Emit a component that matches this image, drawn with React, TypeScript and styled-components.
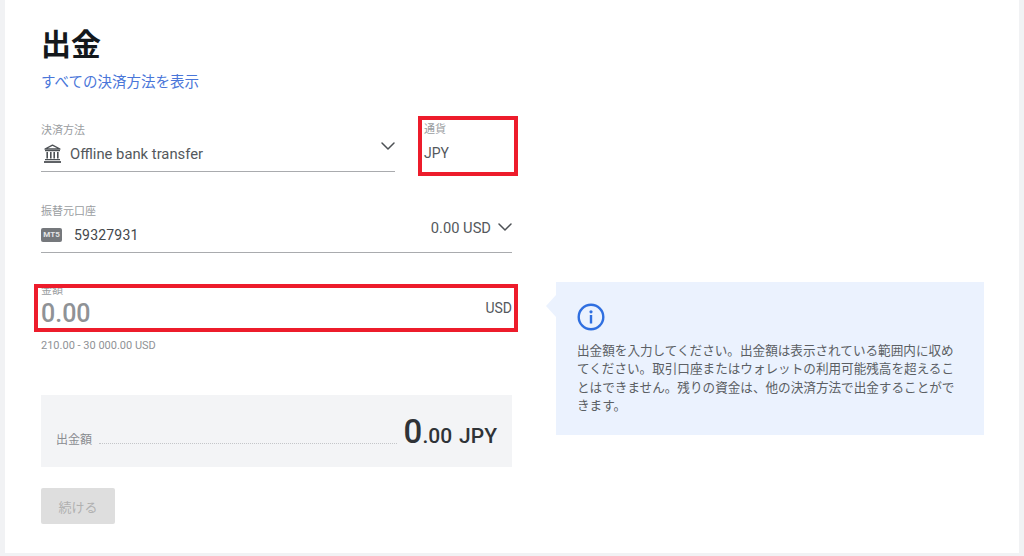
import styled, { createGlobalStyle } from 'styled-components'
import { ChevronDown } from 'lucide-react'

const FONT = `Roboto, 'Noto Sans CJK JP', sans-serif`

const GlobalStyle = createGlobalStyle`
  html, body {
    margin: 0;
    padding: 0;
    background: #f1f2f4;
    font-family: ${FONT};
  }
`

const Page = styled.div`
  width: 1024px;
  height: 556px;
  padding: 0 5px 3px;
  box-sizing: border-box;
  overflow: hidden;
`

const Card = styled.main`
  height: 553px;
  background: #fff;
  box-sizing: border-box;
  padding: 26px 35px 0 36px;
`

const Title = styled.h1`
  margin: 0;
  font-size: 30px;
  line-height: 38px;
  font-weight: 700;
  color: #14181c;
`

const AllMethods = styled.a`
  display: block;
  margin-top: 9px;
  font-size: 14.5px;
  line-height: 20px;
  color: #4a76d9;
`

const Columns = styled.div`
  display: flex;
  align-items: flex-start;
  margin-top: 31px;
`

const FormColumn = styled.div`
  width: 471px;
  flex: none;
`

const TopRow = styled.div`
  display: flex;
  align-items: flex-start;
`

const SelectField = styled.div<{ $width?: string }>`
  width: ${(p) => p.$width ?? '100%'};
  height: 48px;
  flex: none;
  box-sizing: border-box;
  border-bottom: 1px solid #a9abae;
  position: relative;
`

const FieldLabel = styled.div`
  font-size: 11px;
  line-height: 14px;
  color: #9a9da1;
`

const ValueRow = styled.div`
  display: flex;
  align-items: center;
  height: 26px;
  margin-top: 3px;
  font-size: 14.8px;
  color: #54585c;
`

const BankGlyph = styled.svg`
  width: 19px;
  height: 20px;
  margin: 0 8px 0 2px;
  flex: none;
`

const Chevron = styled(ChevronDown)`
  position: absolute;
  right: -5px;
  top: 10px;
  color: #4d5155;
`

const CurrencyBox = styled.div`
  width: 100px;
  height: 60px;
  margin: -8px 0 0 23px;
  flex: none;
  box-sizing: border-box;
  border: 4px solid #ed1c2b;
  padding: 3px 0 0 2px;
`

const CurrencyValue = styled.div`
  margin-top: 6px;
  font-size: 14px;
  line-height: 20px;
  color: #54585c;
`

const SourceField = styled(SelectField)`
  margin-top: 29px;
`

const MtBadge = styled.span`
  width: 21px;
  height: 14px;
  margin-right: 12px;
  border-radius: 2px;
  background: #75787c;
  color: #e4e5e6;
  font-size: 8px;
  font-weight: 700;
  line-height: 14px;
  text-align: center;
  flex: none;
`

const AccountNo = styled.span`
  font-size: 14px;
  letter-spacing: 0.2px;
  color: #43474b;
`

const Balance = styled.span`
  margin: -14px 21px 0 auto;
  font-size: 14.7px;
  color: #54585c;
`

const AmountField = styled.div`
  display: flow-root;
  position: relative;
  height: 40px;
  margin-top: 34px;
`

const AmountLabel = styled(FieldLabel)`
  margin: -3px 0 -1px;
`

const AmountRow = styled.div`
  display: flex;
  justify-content: space-between;
  align-items: flex-start;
`

const AmountValue = styled.span`
  font-size: 25px;
  line-height: 34px;
  font-weight: 500;
  color: #8f9296;
`

const AmountUnit = styled.span`
  margin-top: 2px;
  font-size: 14px;
  line-height: 18px;
  color: #54585c;
`

const Highlight = styled.div`
  position: absolute;
  top: -3px;
  left: -7px;
  width: 484px;
  height: 48px;
  box-sizing: border-box;
  border: 4px solid #ed1c2b;
  pointer-events: none;
`

const Limits = styled.div`
  margin-top: 12px;
  font-size: 11px;
  line-height: 14px;
  color: #8f9296;
`

const SummaryBox = styled.div`
  height: 72px;
  margin-top: 42px;
  padding: 0 15px;
  display: flex;
  align-items: flex-end;
  background: #f3f4f6;
  box-sizing: border-box;
`

const SummaryLabel = styled.span`
  margin-bottom: 19px;
  font-size: 12px;
  line-height: 16px;
  color: #8a8d91;
`

const Leader = styled.span`
  flex: 1;
  margin: 0 7px 23px 7px;
  border-bottom: 1px dotted #c4c6c9;
`

const SummaryAmount = styled.span`
  margin-bottom: 16px;
  font-size: 21px;
  line-height: 30px;
  font-weight: 500;
  color: #2f3337;
  white-space: nowrap;
`

const BigDigit = styled.span`
  font-size: 33px;
`

const Currency = styled.span`
  margin-left: 7px;
`

const ContinueButton = styled.button`
  display: block;
  width: 74px;
  height: 36px;
  margin-top: 21px;
  border: 0;
  border-radius: 2px;
  background: #dedede;
  color: #b0b0b0;
  font: 400 13px ${FONT};
`

const Tip = styled.aside`
  position: relative;
  width: 428px;
  height: 153px;
  margin: 158px 0 0 44px;
  padding: 21px 21px 0;
  box-sizing: border-box;
  background: #ebf2fe;
  flex: none;
  &::before {
    content: '';
    position: absolute;
    left: -10px;
    top: 13px;
    border-style: solid;
    border-width: 11px 10px 11px 0;
    border-color: transparent #ebf2fe transparent transparent;
  }
`

const InfoGlyph = styled.svg`
  display: block;
  width: 28px;
  height: 28px;
`

const TipText = styled.p`
  margin: 11px 0 0;
  width: 382px;
  font-size: 12.6px;
  line-height: 18.3px;
  color: #5b5f64;
`

export default function App() {
  return (
    <>
      <GlobalStyle />
      <Page>
        <Card>
          <Title>出金</Title>
          <AllMethods>すべての決済方法を表示</AllMethods>
          <Columns>
            <FormColumn>
              <TopRow>
                <SelectField $width="354px">
                  <FieldLabel>決済方法</FieldLabel>
                  <ValueRow>
                    <BankGlyph viewBox="0 0 19 20" fill="none" stroke="#4d5155">
                      <path d="M9.5 1.2 L17 5 H2 Z" strokeWidth="1.4" strokeLinejoin="round" />
                      <path d="M2 6.6 H17 M2 15.6 H17" strokeWidth="1.2" />
                      <path d="M4.2 8 V14.4 M7.8 8 V14.4 M11.2 8 V14.4 M14.8 8 V14.4" strokeWidth="1.6" />
                      <path d="M1 18 H18" strokeWidth="1.8" />
                    </BankGlyph>
                    Offline bank transfer
                  </ValueRow>
                  <Chevron size={24} strokeWidth={1.5} />
                </SelectField>
                <CurrencyBox>
                  <FieldLabel>通貨</FieldLabel>
                  <CurrencyValue>JPY</CurrencyValue>
                </CurrencyBox>
              </TopRow>
              <SourceField>
                <FieldLabel>振替元口座</FieldLabel>
                <ValueRow>
                  <MtBadge>MT5</MtBadge>
                  <AccountNo>59327931</AccountNo>
                  <Balance>0.00 USD</Balance>
                </ValueRow>
                <Chevron size={24} strokeWidth={1.5} />
              </SourceField>
              <AmountField>
                <AmountLabel>金額</AmountLabel>
                <AmountRow>
                  <AmountValue>0.00</AmountValue>
                  <AmountUnit>USD</AmountUnit>
                </AmountRow>
                <Highlight />
              </AmountField>
              <Limits>210.00 - 30 000.00 USD</Limits>
              <SummaryBox>
                <SummaryLabel>出金額</SummaryLabel>
                <Leader />
                <SummaryAmount>
                  <BigDigit>0</BigDigit>.00<Currency>JPY</Currency>
                </SummaryAmount>
              </SummaryBox>
              <ContinueButton disabled>続ける</ContinueButton>
            </FormColumn>
            <Tip>
              <InfoGlyph viewBox="0 0 28 28" fill="none">
                <circle cx="14" cy="14" r="12.3" stroke="#2f6fe0" strokeWidth="2.4" />
                <circle cx="14" cy="8.8" r="1.6" fill="#2f6fe0" />
                <rect x="12.8" y="12" width="2.4" height="8.5" fill="#2f6fe0" />
              </InfoGlyph>
              <TipText>
                出金額を入力してください。出金額は表示されている範囲内に収めてください。取引口座またはウォレットの利用可能残高を超えることはできません。残りの資金は、他の決済方法で出金することができます。
              </TipText>
            </Tip>
          </Columns>
        </Card>
      </Page>
    </>
  )
}
